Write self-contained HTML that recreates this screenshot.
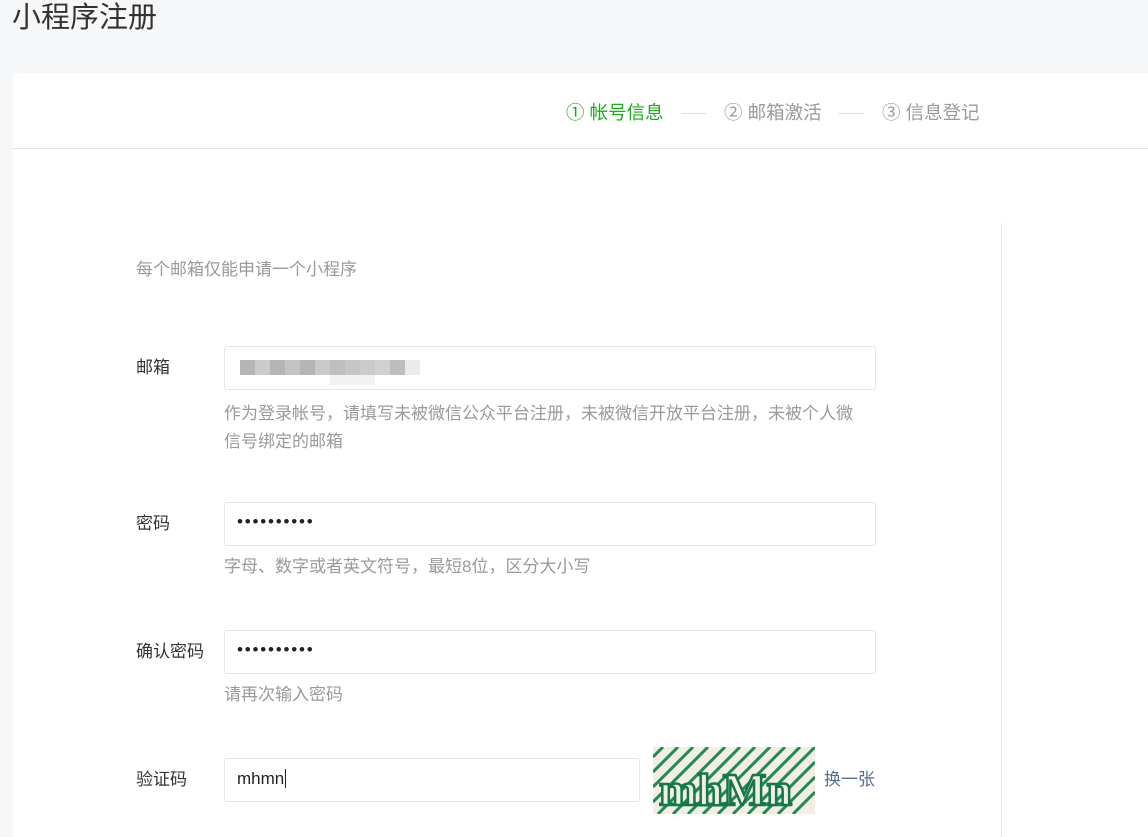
<!DOCTYPE html>
<html><head><meta charset="utf-8"><style>
html,body{margin:0;height:837px;overflow:hidden}
body{background:#f6f7f9;font-family:"Liberation Sans","Noto Sans CJK SC",sans-serif;width:1148px;position:relative}
.t{position:absolute;left:12px;top:0;font-size:29px;color:#333;line-height:36px}
.card{position:absolute;left:13px;top:73px;width:1135px;height:764px;background:#fff;border-radius:4px 0 0 0;overflow:hidden}
.hd{position:absolute;left:0;top:0;right:0;height:75px;border-bottom:1px solid #e7e7eb}
.st{position:absolute;top:28px;font-size:18.5px;line-height:24px;color:#9a9a9a}
.st.on{color:#1aad19}
.ln{position:absolute;top:40px;width:25px;height:1px;background:#ddd}
.vl{position:absolute;left:988px;top:150px;width:1px;height:614px;background:#e7e7eb}
.a{position:absolute;font-size:17px;color:#333;line-height:22px}
.g{color:#9a9a9a}
.in{position:absolute;left:211px;width:652px;height:44px;border:1px solid #e7e7eb;border-radius:3px;box-sizing:border-box;background:#fff}
.dots{position:absolute;left:12px;top:9px;font-size:17px;letter-spacing:1.8px;color:#222}
.px{position:absolute;height:15px;width:15px}
</style></head><body>
<div class="t">小程序注册</div>
<div class="card">
<div class="hd">
<div class="st on" style="left:553px">①&nbsp;帐号信息</div>
<div class="ln" style="left:668px"></div>
<div class="st" style="left:711px">②&nbsp;邮箱激活</div>
<div class="ln" style="left:826px"></div>
<div class="st" style="left:869px">③&nbsp;信息登记</div>
</div>
<div class="vl"></div>
<div class="a g" style="left:123px;top:186px">每个邮箱仅能申请一个小程序</div>
<div class="a" style="left:123px;top:284px">邮箱</div>
<div class="in" style="top:273px">
<div class="px" style="left:15px;top:13px;background:#b5b5b5"></div>
<div class="px" style="left:30px;top:13px;background:#cbcbcb"></div>
<div class="px" style="left:45px;top:13px;background:#b5b5b5"></div>
<div class="px" style="left:60px;top:13px;background:#c4c4c4"></div>
<div class="px" style="left:75px;top:13px;background:#b5b5b5"></div>
<div class="px" style="left:90px;top:13px;background:#c9c9c9"></div>
<div class="px" style="left:105px;top:13px;background:#bfbfbf"></div>
<div class="px" style="left:120px;top:13px;background:#c6c6c6"></div>
<div class="px" style="left:135px;top:13px;background:#cbcbcb"></div>
<div class="px" style="left:150px;top:13px;background:#d1d1d1"></div>
<div class="px" style="left:165px;top:13px;background:#bdbdbd"></div>
<div class="px" style="left:180px;top:13px;background:#ebebeb"></div>
<div class="px" style="left:105px;top:28px;height:10px;width:45px;background:#f2f2f2"></div>
</div>
<div class="a g" style="left:211px;top:327px;width:700px;line-height:28px;white-space:nowrap">作为登录帐号，请填写未被微信公众平台注册，未被微信开放平台注册，未被个人微<br>信号绑定的邮箱</div>
<div class="a" style="left:123px;top:440px">密码</div>
<div class="in" style="top:429px"><div class="dots">••••••••••</div></div>
<div class="a g" style="left:211px;top:483px">字母、数字或者英文符号，最短8位，区分大小写</div>
<div class="a" style="left:123px;top:568px">确认密码</div>
<div class="in" style="top:557px"><div class="dots">••••••••••</div></div>
<div class="a g" style="left:211px;top:611px">请再次输入密码</div>
<div class="a" style="left:123px;top:696px">验证码</div>
<div class="in" style="top:685px;width:416px"><div class="dots" style="font-size:17px;top:10px;letter-spacing:0">mhmn<span style="border-left:1px solid #222;margin-left:1px"></span></div></div>
<svg style="position:absolute;left:640px;top:674px" width="162" height="67" viewBox="0 0 162 67">
<rect width="162" height="67" fill="#f4ede6"/>
<g stroke="#1e8a55" stroke-width="3">
<path d="M0 10L10 0M0 25L25 0M0 40L40 0M0 55L55 0M5 67L72 0M20 67L87 0M35 67L102 0M50 67L117 0M65 67L132 0M80 67L147 0M95 67L162 0M110 67L162 15M125 67L162 30M140 67L162 45"/>
</g>
<text x="6" y="58" font-family="Liberation Serif,serif" font-weight="bold" font-size="46" fill="#f4ede6" stroke="#14774a" stroke-width="2.5">mhMn</text>
</svg>
<div class="a" style="left:811px;top:696px;color:#576b95;font-size:17px">换一张</div>
</div>
</body></html>
